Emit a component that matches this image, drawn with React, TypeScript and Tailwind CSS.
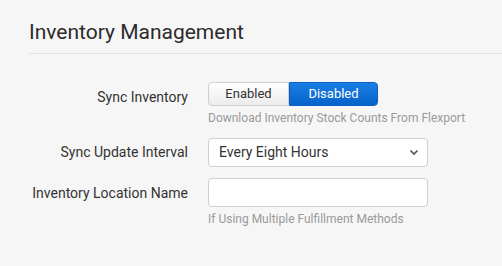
import { useState } from "react";

export default function App() {
  const [syncOn, setSyncOn] = useState(false);
  const [interval, setInterval] = useState("8h");
  const [location, setLocation] = useState("");

  return (
    <div className="w-[502px] h-[266px] overflow-hidden bg-[#f6f6f6] font-['Roboto',sans-serif] text-[#333]">
      <div className="pl-[29px] pt-[20px]">
        <h2 className="text-[21px] leading-[25px] text-[#2b2b2b] pb-[8px] border-b border-[#e2e2e2]">
          Inventory Management
        </h2>

        <div className="flex flex-col mt-[28px]">
          {/* Sync inventory toggle */}
          <div className="flex items-start">
            <label className="w-[159px] text-right text-[14px] leading-[16px] pt-[7px] text-[#333]">
              Sync Inventory
            </label>
            <div className="ml-[20px] flex flex-col">
              <div className="flex h-[24px] w-[170px] text-[13px]">
                <button
                  onClick={() => setSyncOn(true)}
                  className={
                    syncOn
                      ? "w-[81px] rounded-l-[4px] border border-[#0860c4] bg-gradient-to-b from-[#1a7ee6] to-[#0563c9] text-white"
                      : "w-[81px] rounded-l-[4px] border border-[#cfcfcf] bg-gradient-to-b from-white to-[#ececec] text-[#333]"
                  }
                >
                  Enabled
                </button>
                <button
                  onClick={() => setSyncOn(false)}
                  className={
                    !syncOn
                      ? "w-[89px] rounded-r-[4px] border border-[#0860c4] bg-gradient-to-b from-[#1a7ee6] to-[#0563c9] text-white"
                      : "w-[89px] rounded-r-[4px] border border-[#cfcfcf] bg-gradient-to-b from-white to-[#ececec] text-[#333]"
                  }
                >
                  Disabled
                </button>
              </div>
              <p className="mt-[5px] text-[12px] leading-[14px] text-[#9a9a9a]">
                Download Inventory Stock Counts From Flexport
              </p>
            </div>
          </div>

          {/* Update interval */}
          <div className="flex items-start mt-[13px]">
            <label className="w-[159px] text-right text-[14px] leading-[16px] pt-[6px] text-[#333]">
              Sync Update Interval
            </label>
            <div className="ml-[20px] relative w-[220px] h-[29px]">
              <select
                value={interval}
                onChange={(e) => setInterval(e.target.value)}
                className="appearance-none w-full h-full rounded-[4px] border border-[#d0d0d0] bg-white pl-[10px] text-[14px] text-[#333] outline-none"
              >
                <option value="1h">Every Hour</option>
                <option value="4h">Every Four Hours</option>
                <option value="8h">Every Eight Hours</option>
                <option value="24h">Every Day</option>
              </select>
              <svg
                className="absolute right-[9px] top-[11px] pointer-events-none"
                width="10"
                height="7"
                viewBox="0 0 10 7"
              >
                <path d="M1.5 1.5 L5 5 L8.5 1.5" fill="none" stroke="#555" strokeWidth="1.7" />
              </svg>
            </div>
          </div>

          {/* Location name */}
          <div className="flex items-start mt-[11px]">
            <label className="w-[159px] text-right text-[14px] leading-[16px] pt-[7px] text-[#333]">
              Inventory Location Name
            </label>
            <div className="ml-[20px] flex flex-col">
              <input
                value={location}
                onChange={(e) => setLocation(e.target.value)}
                className="w-[220px] h-[29px] rounded-[4px] border border-[#d0d0d0] bg-white px-[10px] text-[14px] outline-none"
              />
              <p className="mt-[5px] text-[12px] leading-[14px] text-[#9a9a9a]">
                If Using Multiple Fulfillment Methods
              </p>
            </div>
          </div>
        </div>
      </div>
    </div>
  );
}
